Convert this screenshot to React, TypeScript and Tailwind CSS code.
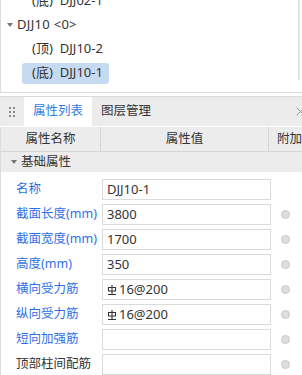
import React from 'react';

const rows: { label: string; value?: string; rebar?: boolean; blue: boolean; dot: boolean }[] = [
  { label: '名称', value: 'DJJ10-1', blue: true, dot: false },
  { label: '截面长度(mm)', value: '3800', blue: true, dot: true },
  { label: '截面宽度(mm)', value: '1700', blue: true, dot: true },
  { label: '高度(mm)', value: '350', blue: true, dot: true },
  { label: '横向受力筋', value: '16@200', rebar: true, blue: true, dot: true },
  { label: '纵向受力筋', value: '16@200', rebar: true, blue: true, dot: true },
  { label: '短向加强筋', blue: true, dot: true },
  { label: '顶部柱间配筋', blue: false, dot: true },
];

function RebarMark() {
  // HRB400 steel grade symbol
  return (
    <svg width="10" height="12" viewBox="0 0 10 12" className="mr-[2px] shrink-0">
      <path d="M5 1V10.5M1.5 3.5h7v3.5h-7zM1 10.5h8" stroke="#333" strokeWidth="1.1" fill="none" />
    </svg>
  );
}

function Caret() {
  return (
    <svg width="6" height="4" viewBox="0 0 6 4" className="shrink-0">
      <path d="M0 0h6L3 4z" fill="#777" />
    </svg>
  );
}

function TreeLabel({ tag, name }: { tag: string; name: string }) {
  return (
    <>
      <span>{tag}</span>
      <span className="ml-[7px]">{name}</span>
    </>
  );
}

export default function App() {
  return (
    <div className="w-[302px] h-[375px] overflow-hidden bg-white text-[12.5px] text-[#333] font-['Noto_Sans','Noto_Sans_CJK_SC',sans-serif]">
      {/* --- tree panel --- */}
      <div className="h-[93px] flex border-l border-b border-[#dcdcdc] overflow-hidden text-[13px]">
        <div className="flex-1 -mt-[11px]">
          <div className="h-[24px] flex items-center pl-[31px]">
            <TreeLabel tag="(底)" name="DJJ02-1" />
          </div>
          <div className="h-[24px] flex items-center pl-[6px] gap-[4px]">
            <Caret />
            <span className="tracking-[0.3px]">DJJ10 &lt;0&gt;</span>
          </div>
          <div className="h-[24px] flex items-center pl-[31px]">
            <TreeLabel tag="(顶)" name="DJJ10-2" />
          </div>
          <div className="h-[24px] flex items-center pl-[21px]">
            <span className="h-[21px] flex items-center pl-[10px] pr-[6px] bg-[#c6dbf2] rounded-[3px]">
              <TreeLabel tag="(底)" name="DJJ10-1" />
            </span>
          </div>
        </div>
        <div className="w-[2px] h-[80px] bg-[#e2e2e2] mr-[2px]" />
      </div>

      {/* --- tab bar --- */}
      <div className="mt-[3px] h-[31px] flex items-end bg-[#ececec] border-t border-[#d9d9d9] border-b border-b-white">
        <div className="w-[24px] h-full flex items-center justify-center">
          <div className="grid grid-cols-2 gap-x-[2px] gap-y-[2px]">
            {Array.from({ length: 6 }).map((_, i) => (
              <span key={i} className="w-[2px] h-[2px] bg-[#8a8a8a]" />
            ))}
          </div>
        </div>
        <div className="w-[68px] h-[29px] bg-white flex items-center justify-center text-[#2f7de1]">属性列表</div>
        <div className="ml-[9px] h-[29px] flex items-center">图层管理</div>
        <div className="ml-auto h-[29px] flex items-center mr-[-3px]">
          <svg width="9" height="9" viewBox="0 0 9 9">
            <path d="M0.5 0.5l8 8M8.5 0.5l-8 8" stroke="#9a9a9a" strokeWidth="1" />
          </svg>
        </div>
      </div>

      {/* --- table --- */}
      <div className="border-l border-[#dcdcdc]">
        <div className="h-[25px] flex bg-[#ececec] border-b border-[#d6d6d6]">
          <div className="w-[101px] flex items-center justify-center border-r border-[#d6d6d6]">属性名称</div>
          <div className="w-[169px] flex items-center justify-center border-r border-[#d6d6d6]">属性值</div>
          <div className="flex-1 flex items-center pl-[8px] whitespace-nowrap">附加</div>
        </div>
        <div className="h-[20px] flex items-center bg-[#ececec] pl-[10px] gap-[4px]">
          <Caret />
          <span>基础属性</span>
        </div>
        <div className="pt-[5px]">
          {rows.map((r, i) => (
            <div key={i} className="h-[25px] flex items-center">
              <div className={`w-[101px] pl-[15px] whitespace-nowrap ${r.blue ? 'text-[#2f6fe6]' : 'text-[#333]'}`}>{r.label}</div>
              <div className="w-[169px] h-[21px] border border-[#dadada] flex items-center px-[4px] whitespace-nowrap overflow-hidden text-[13px]">
                {r.rebar && <RebarMark />}
                {r.value}
              </div>
              <div className="flex-1 flex justify-center pr-[2px]">
                {r.dot && <span className="w-[9px] h-[9px] rounded-full bg-[#dedede] border border-[#c8c8c8]" />}
              </div>
            </div>
          ))}
        </div>
      </div>
    </div>
  );
}
